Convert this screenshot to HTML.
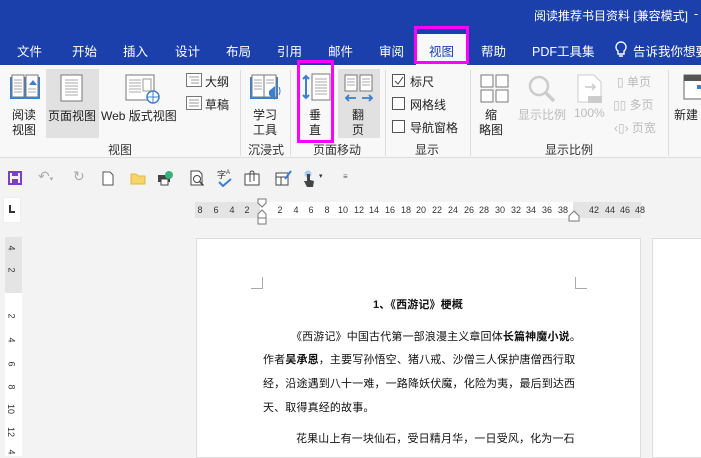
<!DOCTYPE html>
<html><head><meta charset="utf-8"><style>
*{margin:0;padding:0;box-sizing:border-box}
body{width:701px;height:456px;overflow:hidden;position:relative;background:#f3f3f3;font-family:"Liberation Sans","Noto Sans CJK SC",sans-serif;}
.a{position:absolute;white-space:nowrap}
.w{color:#fff;font-size:12.5px}
.t{font-size:12px;color:#222}
.g{color:#bbb}
.lbl{font-size:12px;color:#333}
.sep{position:absolute;width:1px;background:#ddd;top:70px;height:86px}
.cb{position:absolute;width:13px;height:13px;border:1px solid #555;background:#fff}
.doc{font-size:11px;color:#111;letter-spacing:0.15px}
.rn{font-size:9px;color:#333}
.r{position:absolute;top:205px;font-size:9px;color:#333;transform:translateX(-50%)}
</style></head><body>
<div class="a" style="left:0;top:0;width:701px;height:65px;background:#1b3fab"></div>
<div class="a w" style="left:534px;top:7px;font-size:12px">阅读推荐书目资料 [兼容模式]</div>
<div class="a w" style="left:694px;top:7px">-</div>
<div class="a" style="left:416px;top:34px;width:51px;height:31px;background:#f8f8f8"></div>
<div class="a" style="left:414px;top:26px;width:55px;height:38px;border:3px solid #f0f"></div>
<div class="a w" style="left:17px;top:41px">文件</div>
<div class="a w" style="left:72px;top:41px">开始</div>
<div class="a w" style="left:123px;top:41px">插入</div>
<div class="a w" style="left:175px;top:41px">设计</div>
<div class="a w" style="left:226px;top:41px">布局</div>
<div class="a w" style="left:277px;top:41px">引用</div>
<div class="a w" style="left:328px;top:41px">邮件</div>
<div class="a w" style="left:379px;top:41px">审阅</div>
<div class="a" style="left:429px;top:41px;font-size:12.5px;color:#1b3fab">视图</div>
<div class="a w" style="left:481px;top:41px">帮助</div>
<div class="a w" style="left:532px;top:41px">PDF工具集</div>
<svg class="a" style="left:614px;top:40px" width="14" height="18"><path d="M7 2a5 5 0 0 0-3 9v3h6v-3a5 5 0 0 0-3-9zM5 16h4" stroke="#fff" fill="none" stroke-width="1.4"/></svg>
<div class="a w" style="left:633px;top:41px">告诉我你想要</div>
<!-- ribbon -->
<div class="a" style="left:0;top:65px;width:701px;height:93px;background:#f8f8f8;border-bottom:1px solid #ddd"></div>
<svg class="a" style="left:9px;top:73px" width="32" height="28"><rect x="1" y="4" width="30" height="22" fill="#3b7fd0"/><rect x="3" y="2" width="12" height="22" fill="#fff" stroke="#777"/><rect x="17" y="2" width="12" height="22" fill="#fff" stroke="#777"/><path d="M5 7h8M5 10h8M5 13h8M5 16h8M5 19h8M19 16h8M19 19h8" stroke="#aaa"/><path d="M20 12l4-5 4 5z" fill="#3b7fd0"/></svg>
<div class="a t" style="left:12px;top:106px">阅读</div><div class="a t" style="left:12px;top:121px">视图</div>
<div class="a" style="left:46px;top:69px;width:53px;height:69px;background:#e1e1e1"></div>
<svg class="a" style="left:60px;top:74px" width="24" height="28"><rect x="1" y="1" width="21" height="26" fill="#fff" stroke="#777"/><path d="M5 6h13M5 9h13M5 12h13M5 15h13M5 18h13M5 21h13" stroke="#aaa"/></svg>
<div class="a t" style="left:48px;top:107px">页面视图</div>
<svg class="a" style="left:125px;top:74px" width="36" height="30"><rect x="1" y="1" width="28" height="25" fill="#fff" stroke="#777"/><path d="M4 6h12M4 9h12M4 12h12M4 15h12M4 18h12" stroke="#aaa"/><rect x="18" y="5" width="8" height="12" fill="#fff" stroke="#999"/><circle cx="28" cy="23" r="6" fill="#fff" stroke="#3b7fd0" stroke-width="1.5"/><path d="M22 23h12M28 17v12" stroke="#3b7fd0"/></svg>
<div class="a t" style="left:101px;top:107px">Web 版式视图</div>
<svg class="a" style="left:186px;top:73px" width="16" height="14"><rect x=".5" y=".5" width="15" height="13" fill="#fff" stroke="#777"/><path d="M3 4h10M5 7h8M5 10h8" stroke="#999"/></svg>
<div class="a t" style="left:205px;top:73px">大纲</div>
<svg class="a" style="left:186px;top:96px" width="16" height="14"><rect x=".5" y=".5" width="15" height="13" fill="#fff" stroke="#777"/><path d="M3 4h10M3 7h10M3 10h10" stroke="#999"/></svg>
<div class="a t" style="left:205px;top:96px">草稿</div>
<div class="a lbl" style="left:108px;top:141px">视图</div>
<div class="sep" style="left:240px"></div>
<svg class="a" style="left:249px;top:73px" width="34" height="30"><rect x="1" y="4" width="28" height="22" fill="#3b7fd0"/><rect x="3" y="2" width="12" height="22" fill="#fff" stroke="#777"/><rect x="15" y="2" width="12" height="22" fill="#fff" stroke="#777"/><path d="M5 7h8M5 10h8M5 13h8M5 16h8M17 7h8M17 10h8" stroke="#aaa"/><path d="M20 18l6-5v14l-6-5z" fill="#3b7fd0"/><path d="M30 14q2 4 0 8" stroke="#3b7fd0" fill="none"/></svg>
<div class="a t" style="left:253px;top:106px">学习</div><div class="a t" style="left:253px;top:121px">工具</div>
<div class="a lbl" style="left:248px;top:141px">沉浸式</div>
<div class="sep" style="left:290px"></div>
<svg class="a" style="left:300px;top:73px" width="32" height="30"><path d="M6 3v22M3 6l3-3 3 3M3 22l3 3 3-3" stroke="#3b7fd0" stroke-width="2" fill="none"/><rect x="12" y="1" width="18" height="26" fill="#fff" stroke="#777"/><path d="M15 6h12M15 9h12M15 12h12M15 15h12M15 18h12M15 21h12" stroke="#aaa"/></svg>
<div class="a t" style="left:309px;top:106px">垂</div><div class="a t" style="left:309px;top:121px">直</div>
<div class="a" style="left:297px;top:60px;width:37px;height:83px;border:3px solid #f0f"></div>
<div class="a" style="left:338px;top:69px;width:42px;height:69px;background:#e1e1e1"></div>
<svg class="a" style="left:344px;top:74px" width="30" height="30"><rect x="1" y="1" width="12" height="16" fill="#fff" stroke="#777"/><rect x="16" y="1" width="12" height="16" fill="#fff" stroke="#777"/><path d="M3 5h8M3 8h8M3 11h8M18 5h8M18 8h8M18 11h8" stroke="#aaa"/><path d="M2 24h10M5 21l-3 3 3 3M18 24h10M25 21l3 3-3 3" stroke="#3b7fd0" stroke-width="1.8" fill="none"/></svg>
<div class="a t" style="left:352px;top:106px">翻</div><div class="a t" style="left:352px;top:121px">页</div>
<div class="a lbl" style="left:313px;top:141px">页面移动</div>
<div class="sep" style="left:385px"></div>
<div class="cb" style="left:392px;top:74px"></div>
<svg class="a" style="left:394px;top:76px" width="10" height="10"><path d="M1 5l3 3 5-7" stroke="#444" fill="none"/></svg>
<div class="a t" style="left:410px;top:73px">标尺</div>
<div class="cb" style="left:392px;top:97px"></div><div class="a t" style="left:410px;top:96px">网格线</div>
<div class="cb" style="left:392px;top:120px"></div><div class="a t" style="left:410px;top:119px">导航窗格</div>
<div class="a lbl" style="left:415px;top:141px">显示</div>
<div class="sep" style="left:470px"></div>
<svg class="a" style="left:480px;top:74px" width="30" height="30"><rect x="1" y="1" width="12" height="12" fill="#fff" stroke="#777"/><rect x="16" y="1" width="12" height="12" fill="#fff" stroke="#777"/><rect x="1" y="16" width="12" height="12" fill="#fff" stroke="#777"/><rect x="16" y="16" width="12" height="12" fill="#fff" stroke="#777"/></svg>
<div class="a t" style="left:485px;top:106px">缩</div><div class="a t" style="left:479px;top:121px">略图</div>
<svg class="a" style="left:527px;top:74px" width="30" height="30"><circle cx="12" cy="12" r="9" fill="none" stroke="#ccc" stroke-width="2.5"/><path d="M19 19l8 8" stroke="#ccc" stroke-width="3.5"/></svg>
<div class="a t g" style="left:518px;top:106px">显示比例</div>
<svg class="a" style="left:575px;top:74px" width="30" height="32"><path d="M3 1h16l7 7v20H3z" fill="#fff" stroke="#ccc"/><path d="M10 13h10M17 10l3 3-3 3" stroke="#ccc" fill="none" stroke-width="1.5"/><rect x="13" y="22" width="14" height="7" fill="#ccc"/></svg>
<div class="a t g" style="left:574px;top:106px">100%</div>
<div class="a t g" style="left:617px;top:73px">▯ 单页</div>
<div class="a t g" style="left:613px;top:96px">▯▯ 多页</div>
<div class="a t g" style="left:614px;top:119px">‹▯› 页宽</div>
<div class="a lbl" style="left:545px;top:141px">显示比例</div>
<div class="sep" style="left:668px"></div>
<svg class="a" style="left:683px;top:73px" width="20" height="30"><rect x="1" y="2" width="18" height="24" fill="#fff" stroke="#666"/><rect x="1" y="2" width="18" height="6" fill="#555"/><rect x="14" y="12" width="6" height="4" fill="#3b7fd0"/></svg>
<div class="a t" style="left:674px;top:106px">新建</div>
<!-- QAT -->
<svg class="a" style="left:8px;top:171px" width="14" height="14"><rect x="1" y="1" width="12" height="12" fill="none" stroke="#7b3fc8" stroke-width="2"/><rect x="4" y="1" width="6" height="4" fill="#7b3fc8"/><rect x="4" y="8" width="6" height="5" fill="#7b3fc8"/></svg>
<div class="a" style="left:38px;top:168px;color:#aaa;font-size:14px">↶<span style="font-size:7px">▾</span></div>
<div class="a" style="left:73px;top:168px;color:#aaa;font-size:14px">↻</div>
<svg class="a" style="left:102px;top:171px" width="12" height="15"><path d="M1 1h7l3 3v10H1z" fill="#fff" stroke="#555"/></svg>
<svg class="a" style="left:130px;top:172px" width="16" height="13"><path d="M1 2h5l2 2h7v8H1z" fill="#f6d56b" stroke="#e0b840"/></svg>
<svg class="a" style="left:156px;top:170px" width="18" height="16"><rect x="2" y="5" width="12" height="7" fill="#444"/><rect x="5" y="9" width="7" height="6" fill="#fff" stroke="#444"/><circle cx="13" cy="5" r="4" fill="#3ab07a"/></svg>
<svg class="a" style="left:190px;top:170px" width="16" height="17"><path d="M1 1h8l3 3v11H1z" fill="#fff" stroke="#444"/><circle cx="7" cy="9" r="3.5" fill="none" stroke="#444"/><path d="M9.5 11.5l4 4" stroke="#444" stroke-width="1.5"/></svg>
<div class="a" style="left:217px;top:168px;font-size:9px;color:#333">字<sup style="font-size:6px">A</sup></div>
<svg class="a" style="left:218px;top:178px" width="14" height="9"><path d="M1 4l4 4 8-7" stroke="#3b7fd0" stroke-width="2" fill="none"/></svg>
<svg class="a" style="left:244px;top:170px" width="18" height="16"><rect x="1" y="4" width="14" height="11" fill="#fff" stroke="#444"/><path d="M6 12V3a2 2 0 0 1 4 0v8" stroke="#444" fill="none"/></svg>
<svg class="a" style="left:275px;top:170px" width="18" height="16"><rect x="1" y="3" width="12" height="12" fill="#fff" stroke="#444"/><path d="M1 7h12M6 7v8" stroke="#444"/><path d="M10 9l6-8" stroke="#3b7fd0" stroke-width="2"/></svg>
<svg class="a" style="left:302px;top:170px" width="14" height="18"><circle cx="6" cy="4" r="3.5" fill="#a6cdf0"/><path d="M5 4v7l-3 0 3 6h6l1-6-4-1V4z" fill="#444"/></svg>
<div class="a" style="left:319px;top:172px;font-size:7px;color:#333">▾</div>
<div class="a" style="left:343px;top:172px;font-size:8px;color:#555">≡</div>
<!-- ruler -->
<div class="a" style="left:3px;top:197px;width:18px;height:26px;background:#fff;border:1px solid #eee"></div>
<div class="a" style="left:9px;top:205px;width:6px;height:8px;border-left:2px solid #333;border-bottom:2px solid #333"></div>
<div class="a" style="left:195px;top:202px;width:446px;height:16px;background:#fff"></div>
<div class="a" style="left:195px;top:202px;width:65px;height:16px;background:#e4e4e4"></div>
<div class="a" style="left:573px;top:202px;width:68px;height:16px;background:#e4e4e4"></div>
<span class="r" style="left:200px">8</span><span class="r" style="left:216px">6</span><span class="r" style="left:232px">4</span><span class="r" style="left:247px">2</span>
<span class="r" style="left:280px">2</span><span class="r" style="left:296px">4</span><span class="r" style="left:311px">6</span><span class="r" style="left:327px">8</span>
<span class="r" style="left:343px">10</span><span class="r" style="left:359px">12</span><span class="r" style="left:374px">14</span><span class="r" style="left:390px">16</span>
<span class="r" style="left:406px">18</span><span class="r" style="left:421px">20</span><span class="r" style="left:437px">22</span><span class="r" style="left:453px">24</span>
<span class="r" style="left:469px">26</span><span class="r" style="left:484px">28</span><span class="r" style="left:500px">30</span><span class="r" style="left:516px">32</span>
<span class="r" style="left:531px">34</span><span class="r" style="left:547px">36</span><span class="r" style="left:563px">38</span>
<span class="r" style="left:594px">42</span><span class="r" style="left:610px">44</span><span class="r" style="left:625px">46</span><span class="r" style="left:640px">48</span>
<svg class="a" style="left:257px;top:198px" width="10" height="28"><path d="M1 1h8v4l-4 4-4-4z M1 20v-4l4-4 4 4v4z M1 20h8v6H1z" fill="#fff" stroke="#777"/></svg>
<svg class="a" style="left:568px;top:210px" width="12" height="12"><path d="M1 11V6l5-5 5 5v5z" fill="#fff" stroke="#777"/></svg>
<!-- doc area -->
<div class="a" style="left:5px;top:237px;width:17px;height:219px;background:#fff"></div>
<div class="a" style="left:5px;top:237px;width:17px;height:56px;background:#e4e4e4"></div>
<div class="a rn" style="left:9px;top:243px;transform:rotate(90deg)">4</div>
<div class="a rn" style="left:9px;top:265px;transform:rotate(90deg)">2</div>
<div class="a rn" style="left:9px;top:311px;transform:rotate(90deg)">2</div>
<div class="a rn" style="left:9px;top:335px;transform:rotate(90deg)">4</div>
<div class="a rn" style="left:9px;top:359px;transform:rotate(90deg)">6</div>
<div class="a rn" style="left:9px;top:382px;transform:rotate(90deg)">8</div>
<div class="a rn" style="left:6px;top:404px;transform:rotate(90deg)">10</div>
<div class="a rn" style="left:6px;top:427px;transform:rotate(90deg)">12</div>
<div class="a rn" style="left:9px;top:447px;transform:rotate(90deg)">4</div>
<div class="a" style="left:196px;top:238px;width:445px;height:220px;background:#fff;border:1px solid #ddd"></div>
<div class="a" style="left:652px;top:238px;width:60px;height:220px;background:#fff;border:1px solid #ddd"></div>
<div class="a" style="left:251px;top:277px;width:12px;height:12px;border-right:1px solid #aaa;border-bottom:1px solid #aaa"></div>
<div class="a" style="left:575px;top:277px;width:12px;height:12px;border-left:1px solid #aaa;border-bottom:1px solid #aaa"></div>
<div class="a doc" style="left:373px;top:296px;font-weight:bold">1、《西游记》梗概</div>
<div class="a doc" style="left:291px;top:328px">《西游记》中国古代第一部浪漫主义章回体<b>长篇神魔小说</b>。</div>
<div class="a doc" style="left:263px;top:351px">作者<b>吴承恩</b>，主要写孙悟空、猪八戒、沙僧三人保护唐僧西行取</div>
<div class="a doc" style="left:263px;top:375px">经，沿途遇到八十一难，一路降妖伏魔，化险为夷，最后到达西</div>
<div class="a doc" style="left:263px;top:399px">天、取得真经的故事。</div>
<div class="a doc" style="left:296px;top:430px">花果山上有一块仙石，受日精月华，一日受风，化为一石</div>
</body></html>
